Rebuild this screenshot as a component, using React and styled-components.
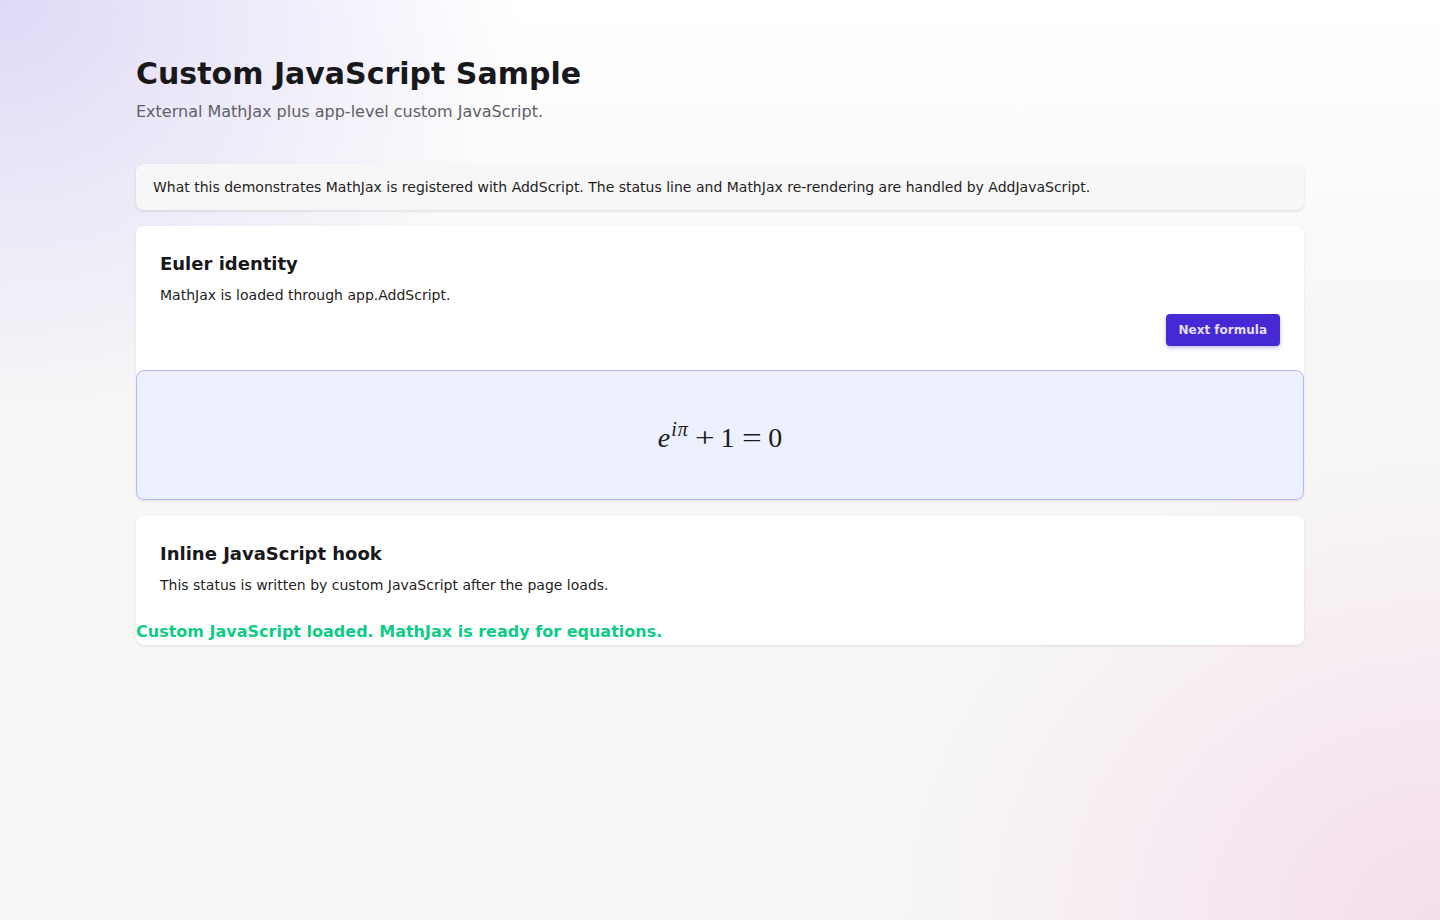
import React from "react";
import styled, { createGlobalStyle } from "styled-components";

const Global = createGlobalStyle`
  html, body { margin: 0; padding: 0; }
  body {
    min-height: 920px;
    font-family: "DejaVu Sans", "Liberation Sans", sans-serif;
    color: #1b1b1f;
    background:
      radial-gradient(ellipse 520px 420px at 0% 0%, rgba(221, 214, 246, 0.95), rgba(221, 214, 246, 0) 100%),
      radial-gradient(ellipse 560px 480px at 100% 100%, rgba(245, 222, 236, 1), rgba(245, 222, 236, 0) 100%),
      linear-gradient(180deg, #ffffff 0px, #f7f7f7 320px, #f7f7f7 100%);
  }
`;

const Page = styled.main`
  width: 1168px;
  margin: 0 auto;
  padding: 56px 0 40px;
  display: flex;
  flex-direction: column;
`;

const Header = styled.header`
  display: flex;
  flex-direction: column;
  gap: 10px;
  margin-bottom: 42px;
`;

const Title = styled.h1`
  margin: 0;
  font-size: 30px;
  line-height: 36px;
  font-weight: 700;
  color: #18181b;
`;

const Subtitle = styled.p`
  margin: 0;
  font-size: 16px;
  line-height: 20px;
  color: #5f5f66;
`;

const Stack = styled.div`
  display: flex;
  flex-direction: column;
  gap: 16px;
`;

const Info = styled.div`
  background: #f7f7f7;
  border-radius: 8px;
  box-shadow: 0 1px 3px rgba(0, 0, 0, 0.12);
  padding: 14px 17px;
  font-size: 14px;
  line-height: 18px;
  color: #1e1e22;
`;

const Card = styled.section`
  background: #ffffff;
  border-radius: 8px;
  box-shadow: 0 1px 3px rgba(0, 0, 0, 0.1);
  display: flex;
  flex-direction: column;
`;

const CardBody = styled.div`
  padding: 27px 24px ${(p) => p.$bottom || 24}px;
  display: flex;
  flex-direction: column;
`;

const CardTitle = styled.h2`
  margin: 0 0 11px;
  font-size: 18px;
  line-height: 22px;
  font-weight: 700;
  color: #18181b;
`;

const CardText = styled.p`
  margin: 0;
  font-size: 14px;
  line-height: 18px;
  color: #1e1e22;
`;

const Actions = styled.div`
  display: flex;
  justify-content: flex-end;
  margin-top: 10px;
`;

const Button = styled.button`
  height: 32px;
  padding: 0 13px;
  border: none;
  border-radius: 4px;
  background: #4629d4;
  color: #e4defc;
  font-family: "DejaVu Sans", sans-serif;
  font-size: 12px;
  font-weight: 700;
  box-shadow: 0 2px 4px rgba(70, 41, 212, 0.3);
  cursor: pointer;
`;

const Formula = styled.div`
  height: 130px;
  background: #edf0fe;
  border: 1px solid #bdb5f0;
  border-radius: 8px;
  display: flex;
  align-items: center;
  justify-content: center;
  font-family: "Liberation Serif", "DejaVu Serif", serif;
  font-size: 28px;
  color: #1b1b1b;
  padding-top: 6px;
  box-sizing: border-box;
`;

const MathVar = styled.i`
  font-style: italic;
`;

const Sup = styled.sup`
  font-size: 20px;
  font-style: italic;
  vertical-align: 11px;
  line-height: 0;
  margin-left: 1px;
  letter-spacing: 1px;
`;

const Op = styled.span`
  display: inline-block;
  margin: 0 ${(p) => p.$space}px;
  transform: scale(1.25, 1);
`;

const Status = styled.div`
  font-size: 16px;
  line-height: 20px;
  font-weight: 700;
  color: #0ecb85;
  padding-bottom: 3px;
`;

export default function App() {
  return (
    <>
      <Global />
      <Page>
        <Header>
          <Title>Custom JavaScript Sample</Title>
          <Subtitle>External MathJax plus app-level custom JavaScript.</Subtitle>
        </Header>
        <Stack>
          <Info>
            What this demonstrates MathJax is registered with AddScript. The status line and MathJax re-rendering are handled by AddJavaScript.
          </Info>
          <Card>
            <CardBody>
              <CardTitle>Euler identity</CardTitle>
              <CardText>MathJax is loaded through app.AddScript.</CardText>
              <Actions>
                <Button>Next formula</Button>
              </Actions>
            </CardBody>
            <Formula>
              <span>
                <MathVar>e</MathVar>
                <Sup>iπ</Sup>
                <Op $space={8}>+</Op>1<Op $space={9}>=</Op>0
              </span>
            </Formula>
          </Card>
          <Card>
            <CardBody $bottom={28}>
              <CardTitle>Inline JavaScript hook</CardTitle>
              <CardText>This status is written by custom JavaScript after the page loads.</CardText>
            </CardBody>
            <Status>Custom JavaScript loaded. MathJax is ready for equations.</Status>
          </Card>
        </Stack>
      </Page>
    </>
  );
}
